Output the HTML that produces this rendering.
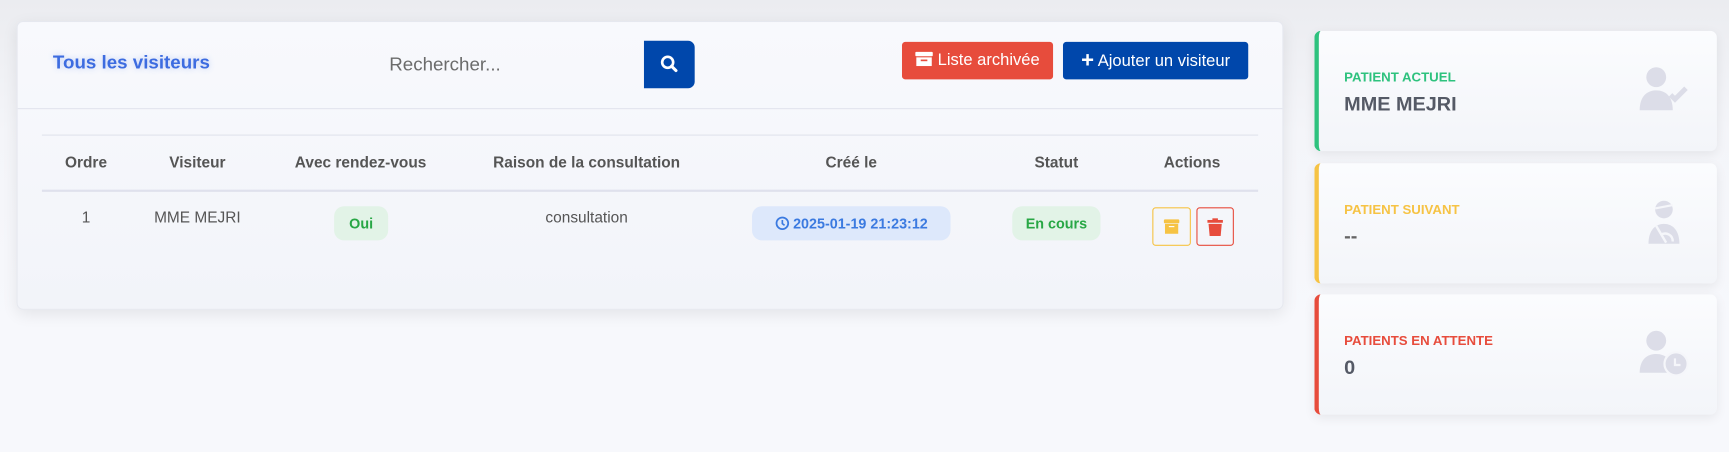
<!DOCTYPE html>
<html><head><meta charset="utf-8"><style>
html,body{margin:0;padding:0;}
body{width:1729px;height:452px;overflow:hidden;background:#f7f8fc;font-family:"Liberation Sans",sans-serif;}
#w{position:absolute;left:0;top:0;width:1568px;height:410px;transform:scale(1.10268);transform-origin:0 0;background:linear-gradient(#ebecf0 0,#f4f5f9 120px,#f7f8fc 300px);}
.card{position:absolute;left:15px;top:19px;width:1149px;height:262px;border-radius:6px;background:linear-gradient(#f8f9fd,#f2f4f9);box-shadow:0 4px 14px rgba(0,0,0,.08);border:1px solid #e6e8ef;box-sizing:border-box;}
.abs{position:absolute;}
.title{left:32px;top:27px;font-size:17px;color:#3d6ce0;font-weight:bold;text-shadow:0 0 6px rgba(61,108,224,.3);}
.search{left:337px;top:29px;font-size:17px;color:#6b6b6b;}
.sbtn{left:568px;top:17px;width:46px;height:43px;background:#0047ab;border-radius:0 6px 6px 0;}
.btn{top:18px;height:34px;border-radius:3px;color:#fff;font-size:15px;line-height:34px;text-align:center;}
.hline{left:0;right:0;top:78px;height:1px;background:#e3e5ee;}
.tl{left:22px;width:1103px;height:1px;background:#e1e3ec;}
.th{top:119px;font-size:14px;font-weight:bold;color:#555;text-align:center;transform:translateX(-50%);white-space:nowrap;}
.td{top:169px;font-size:14px;color:#555;text-align:center;transform:translateX(-50%);white-space:nowrap;}
.badge{top:167px;height:31px;border-radius:9px;font-size:13px;font-weight:bold;line-height:31px;text-align:center;}
.side{position:absolute;left:1192px;width:365px;height:109px;border-radius:6px;background:linear-gradient(#fbfcfe,#f3f5f9);box-shadow:0 3px 10px rgba(0,0,0,.07);border-left:4px solid;box-sizing:border-box;}
.lab{position:absolute;left:23px;top:35px;font-size:12px;font-weight:bold;}
.val{position:absolute;left:23px;top:56px;font-size:18px;font-weight:bold;color:#555a66;}
.ic{position:absolute;left:290px;top:32px;}
</style></head><body><div id="w">
<div class="card">
 <div class="abs title">Tous les visiteurs</div>
 <div class="abs search">Rechercher...</div>
 <div class="abs sbtn"><svg width="46" height="43"><circle cx="21.5" cy="19.5" r="5" fill="none" stroke="#fff" stroke-width="2.4"/><line x1="25" y1="23" x2="29" y2="27" stroke="#fff" stroke-width="2.8" stroke-linecap="round"/></svg></div>
 <div class="abs btn" style="left:802px;width:137px;background:#e74c3c;"><svg width="16" height="14" style="vertical-align:-1px"><rect x="0" y="1" width="16" height="4" rx="1" fill="#fff"/><rect x="1" y="6" width="14" height="8" fill="#fff"/><rect x="5" y="8" width="6" height="1.5" fill="#e74c3c"/></svg> Liste archivée</div>
 <div class="abs btn" style="left:948px;width:168px;background:#0047ab;"><b style="font-size:20px;vertical-align:-1px">+</b> Ajouter un visiteur</div>
 <div class="abs hline"></div>
 <div class="abs tl" style="top:102px"></div>
 <div class="abs tl" style="top:152px;height:2px;background:#dfe1ed"></div>
 <div class="abs th" style="left:62px">Ordre</div>
 <div class="abs th" style="left:163px">Visiteur</div>
 <div class="abs th" style="left:311px">Avec rendez-vous</div>
 <div class="abs th" style="left:516px">Raison de la consultation</div>
 <div class="abs th" style="left:756px">Créé le</div>
 <div class="abs th" style="left:942px">Statut</div>
 <div class="abs th" style="left:1065px">Actions</div>
 <div class="abs td" style="left:62px">1</div>
 <div class="abs td" style="left:163px">MME MEJRI</div>
 <div class="abs badge" style="left:287px;width:49px;background:#e2f3e7;color:#28a745">Oui</div>
 <div class="abs td" style="left:516px">consultation</div>
 <div class="abs badge" style="left:666px;width:180px;background:#dde8fb;color:#3b7ae0"><svg width="13" height="13" style="vertical-align:-2px"><circle cx="6.5" cy="6.5" r="5.3" fill="none" stroke="#3b7ae0" stroke-width="1.6"/><path d="M6.5 3.5V6.8L8.5 8.3" fill="none" stroke="#3b7ae0" stroke-width="1.5"/></svg> 2025-01-19 21:23:12</div>
 <div class="abs badge" style="left:902px;width:80px;background:#e2f3e7;color:#28a745">En cours</div>
 <div class="abs" style="left:1029px;top:168px;width:35px;height:35px;border:1px solid #f6c344;border-radius:3px;box-sizing:border-box"><svg width="33" height="33"><rect x="9.5" y="10" width="14" height="3.5" rx="1" fill="#f6c344"/><rect x="10.5" y="14" width="12" height="9" fill="#f6c344"/><rect x="14" y="16" width="5" height="1" fill="#fff"/></svg></div>
 <div class="abs" style="left:1069px;top:168px;width:34px;height:35px;border:1px solid #e74c3c;border-radius:3px;box-sizing:border-box"><svg width="32" height="33"><rect x="9" y="10.5" width="14" height="2.5" fill="#e74c3c"/><rect x="13.5" y="9" width="5" height="2" fill="#e74c3c"/><path d="M10 14H22L21 25H11Z" fill="#e74c3c"/></svg></div>
</div>
<div class="side" style="top:28px;border-color:#2ec27e"><div class="lab" style="color:#2ec27e">PATIENT ACTUEL</div><div class="val">MME MEJRI</div>
<svg class="ic" width="48" height="42" viewBox="0 0 48 42"><circle cx="16" cy="10" r="9" fill="#dcdde8"/><path d="M1 40C1 28 7 22 16 22C25 22 31 28 31 40Z" fill="#dcdde8"/><path d="M29 26L33 30L43 20" fill="none" stroke="#dcdde8" stroke-width="4.5"/></svg></div>
<div class="side" style="top:148px;border-color:#f6c344"><div class="lab" style="color:#f6c344">PATIENT SUIVANT</div><div class="val" style="color:#666">--</div>
<svg class="ic" width="48" height="42" viewBox="0 0 48 42"><circle cx="23" cy="10" r="8" fill="#dcdde8"/><path d="M15 9L31 6" stroke="#f5f6fa" stroke-width="2"/><path d="M9 41C9 29 15 23 23 23C31 23 37 29 37 41Z" fill="#dcdde8"/><path d="M16 25L25 40M20 33C25 30 31 33 31 39" fill="none" stroke="#f5f6fa" stroke-width="2.2"/></svg></div>
<div class="side" style="top:267px;border-color:#e74c3c"><div class="lab" style="color:#e74c3c">PATIENTS EN ATTENTE</div><div class="val">0</div>
<svg class="ic" width="48" height="42" viewBox="0 0 48 42"><circle cx="16" cy="10" r="9" fill="#dcdde8"/><path d="M1 39C1 28 7 22 16 22C25 22 31 28 31 39Z" fill="#dcdde8"/><circle cx="34" cy="31" r="10.5" fill="#dcdde8" stroke="#f5f6fa" stroke-width="2"/><path d="M33 26V32H38" fill="none" stroke="#f5f6fa" stroke-width="2"/></svg></div>
</div></body></html>
